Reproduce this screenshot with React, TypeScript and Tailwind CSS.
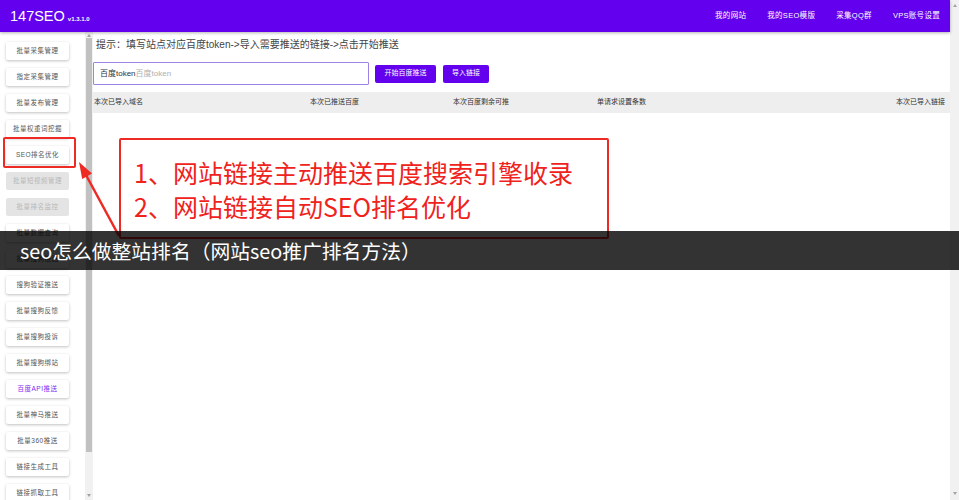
const cjk = { fontFamily: '"Liberation Sans", "Noto Sans CJK SC", sans-serif' };

const menu = [
  { label: "批量采集管理" },
  { label: "指定采集管理" },
  { label: "批量发布管理" },
  { label: "批量权重词挖掘" },
  { label: "SEO排名优化" },
  { label: "批量短视频管理", disabled: true },
  { label: "批量排名监控", disabled: true },
  { label: "批量数据查询" },
  { label: "批量搜狗推送" },
  { label: "搜狗验证推送" },
  { label: "批量搜狗反馈" },
  { label: "批量搜狗投诉" },
  { label: "批量搜狗绑站" },
  { label: "百度API推送", active: true },
  { label: "批量神马推送" },
  { label: "批量360推送" },
  { label: "链接生成工具" },
  { label: "链接抓取工具" },
];

const nav = ["我的网站", "我的SEO模版", "采集QQ群", "VPS账号设置"];

const ScrollTrack = ({ thumbEnd }: { thumbEnd: number }) => (
  <div className="relative w-full h-full bg-[#f1f1f1]">
    <div className="absolute left-1/2 -translate-x-1/2 top-[2px] w-0 h-0 border-l-[2px] border-r-[2px] border-b-[3px] border-l-transparent border-r-transparent border-b-[#a3a3a3]" />
    <div
      className="absolute left-[1px] right-[1px] top-[6px] bg-[#c1c1c1]"
      style={{ height: thumbEnd }}
    />
    <div className="absolute left-1/2 -translate-x-1/2 bottom-[3px] w-0 h-0 border-l-[2px] border-r-[2px] border-t-[3px] border-l-transparent border-r-transparent border-t-[#a3a3a3]" />
  </div>
);

export default function App() {
  return (
    <div className="relative w-[959px] h-[500px] overflow-hidden flex bg-white" style={cjk}>
      <div className="flex-1 flex flex-col min-w-0">
        <header className="h-[32px] bg-[#6300ee] flex items-center shadow-[0_1px_3px_rgba(0,0,0,0.3)] z-10">
          <div className="pl-[10px] flex items-end gap-[3px]">
            <span className="text-white text-[14.5px] leading-none">147SEO</span>
            <span className="text-white text-[6px] font-bold leading-none mb-[1px]">v1.3.1.0</span>
          </div>
          <nav className="ml-auto flex gap-[21px] text-white text-[7.5px] tracking-[0.3px] pr-[10px]">
            {nav.map((n) => (
              <span key={n}>{n}</span>
            ))}
          </nav>
        </header>
        <div className="flex flex-1 min-h-0">
          <aside className="w-[85px] flex flex-col gap-[8px] pt-[10px]">
            {menu.map((m) => (
              <div
                key={m.label}
                className={`shrink-0 ml-[6px] w-[63px] h-[18px] flex items-center justify-center text-[6.5px] tracking-[0.5px] rounded-[2px] ${
                  m.disabled
                    ? "bg-[#e4e4e4] text-[#b8b8b8]"
                    : "bg-white shadow-[0_1px_3px_rgba(0,0,0,0.25)] " +
                      (m.active ? "text-[#7a2cf0]" : "text-[#555]")
                }`}
              >
                {m.label}
              </div>
            ))}
          </aside>
          <div className="w-[8px] shrink-0">
            <ScrollTrack thumbEnd={414} />
          </div>
          <main className="flex-1 flex flex-col pt-[5px]">
            <p className="pl-[3px] text-[10px] leading-[15px] text-[#444]">
              提示：填写站点对应百度token-&gt;导入需要推送的链接-&gt;点击开始推送
            </p>
            <div className="flex items-center mt-[10px] gap-[6px]">
              <div className="w-[276px] h-[23px] border border-[#9f82e6] rounded-[1px] flex items-center pl-[6px] text-[8px]">
                <span className="text-[#333]">百度token</span>
                <span className="text-[#b0b0b0]">百度token</span>
              </div>
              <button className="w-[61px] h-[18px] bg-[#6300ee] text-white text-[7px] rounded-[2px]">开始百度推送</button>
              <button className="ml-[1px] w-[46px] h-[18px] bg-[#6300ee] text-white text-[7px] rounded-[2px]">导入链接</button>
            </div>
            <div className="mt-[7px] h-[21px] bg-[#eeeeee] flex items-center text-[7px] text-[#333] pl-[1px] pr-[5px]">
              <span className="w-[216px]">本次已导入域名</span>
              <span className="w-[143px]">本次已推送百度</span>
              <span className="w-[144px]">本次百度剩余可推</span>
              <span className="flex-1">单请求设置条数</span>
              <span>本次已导入链接</span>
            </div>
          </main>
        </div>
      </div>
      <div className="w-[9px] shrink-0 h-full bg-[#f1f1f1] relative">
        <div className="absolute left-1/2 -translate-x-1/2 top-[4px] w-0 h-0 border-l-[2px] border-r-[2px] border-b-[3px] border-l-transparent border-r-transparent border-b-[#a3a3a3]" />
        <div className="absolute left-1/2 -translate-x-1/2 bottom-[5px] w-0 h-0 border-l-[2px] border-r-[2px] border-t-[3px] border-l-transparent border-r-transparent border-t-[#a3a3a3]" />
      </div>

      {/* annotation overlays */}
      <div className="absolute left-[3px] top-[137px] w-[73px] h-[31px] border-2 border-[#ee2a24] rounded-[2px]" />
      <div className="absolute left-[119px] top-[138px] w-[490px] h-[101px] border-2 border-[#ee2a24] rounded-[2px] bg-white flex flex-col justify-center pl-[13px] text-[#f0221c] text-[25px] leading-[34px]" style={{ fontFamily: '"Noto Sans CJK SC", sans-serif' }}>
        <span>1、网站链接主动推送百度搜索引擎收录</span>
        <span>2、网站链接自动SEO排名优化</span>
      </div>
      <svg className="absolute left-0 top-0" width="140" height="260" viewBox="0 0 140 260">
        <line x1="86" y1="175" x2="119" y2="236" stroke="#ee2a24" strokeWidth="2.5" />
        <polygon points="79,162 82.2,179 92,173.5" fill="#ee2a24" />
      </svg>
      <div className="absolute left-0 right-0 top-[231px] h-[39px] bg-black/80 flex items-center pl-[20px]">
        <span className="text-white text-[19.8px]" style={{ fontFamily: '"Noto Sans CJK SC", sans-serif' }}>
          seo怎么做整站排名（网站seo推广排名方法）
        </span>
      </div>
    </div>
  );
}
